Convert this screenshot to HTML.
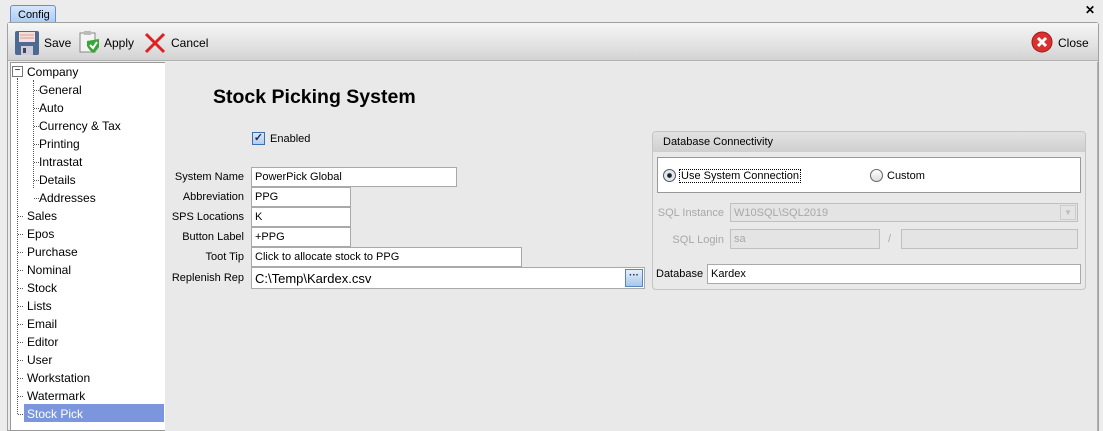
<!DOCTYPE html>
<html><head><style>
*{margin:0;padding:0;box-sizing:border-box}
body{width:1103px;height:431px;background:#ececec;font-family:"Liberation Sans",sans-serif;font-size:12px;color:#000;position:relative;overflow:hidden}
.a{position:absolute;white-space:nowrap}
.in{position:absolute;background:#fff;border:1px solid #a9a9a9;height:20px;padding:3px 3px;font-size:11px}
.lb{position:absolute;font-size:11px;text-align:right;width:80px}
.t{position:absolute;font-size:12px}
.dot{position:absolute;border-left:1px dotted #555}
.hd{position:absolute;border-top:1px dotted #555;width:5px}
</style></head><body>
<div class="a" style="left:10px;top:5px;width:46px;height:20px;border:1px solid #6a8fd0;border-radius:3px;background:linear-gradient(#d5e6fb,#a9c9f2);font-size:11px;padding:3px 0 0 7px">Config</div>
<div class="a" style="left:1085px;top:3px;font-weight:bold;font-size:12px">✕</div>
<div class="a" style="left:7px;top:22px;width:1092px;height:409px;border:1px solid #a0a0a0;border-radius:3px 3px 0 0;background:#ececec"></div>
<div class="a" style="left:8px;top:23px;width:1090px;height:38px;background:linear-gradient(#f6f6f6,#e2e2e2 60%,#d3d3d3);border-bottom:1px solid #b0b0b0"></div>
<svg class="a" style="left:14px;top:30px" width="26" height="26"><rect x="1" y="1" width="24" height="24" rx="2" fill="#4d6a91"/><rect x="5" y="2" width="16" height="10" fill="#f3e0d8"/><line x1="6" y1="5" x2="20" y2="5" stroke="#d99"/><line x1="6" y1="8" x2="20" y2="8" stroke="#d99"/><rect x="7" y="16" width="12" height="9" fill="#ccd"/><rect x="9" y="18" width="3" height="5" fill="#445"/></svg>
<div class="a" style="left:44px;top:36px">Save</div>
<svg class="a" style="left:77px;top:30px" width="24" height="24"><rect x="3" y="3" width="15" height="19" fill="#f4f4f4" stroke="#888"/><rect x="7" y="1" width="7" height="4" fill="#bbb"/><path d="M10 11 L22 9 L22 17 Q18 23 16 23 Q12 20 10 16Z" fill="#3aa63a"/><path d="M13 15 L16 18 L20 12" stroke="#fff" stroke-width="2" fill="none"/></svg>
<div class="a" style="left:104px;top:36px">Apply</div>
<svg class="a" style="left:143px;top:31px" width="24" height="24"><path d="M3 3 L21 21 M21 3 L3 21" stroke="#e02020" stroke-width="3"/></svg>
<div class="a" style="left:171px;top:36px">Cancel</div>
<svg class="a" style="left:1031px;top:31px" width="22" height="22"><circle cx="11" cy="11" r="10" fill="#d93030" stroke="#a01818"/><path d="M7 7 L15 15 M15 7 L7 15" stroke="#fff" stroke-width="3"/></svg>
<div class="a" style="left:1058px;top:36px">Close</div>
<div class="a" style="left:10px;top:62px;width:156px;height:369px;background:#fff;border:1px solid #999"></div>
<div class="a" style="left:165px;top:62px;width:932px;height:369px;background:#e9e9e9"></div>
<div class="a" style="left:1097px;top:62px;width:1px;height:369px;background:#b0b0b0"></div>
<div class="a" style="left:12px;top:66px;width:11px;height:11px;border:1px solid #777;background:#fff;font-size:10px;line-height:8px;text-align:center">−</div>
<div class="t" style="left:27px;top:65px">Company</div>
<div class="dot" style="left:33px;top:80px;height:108px"></div>
<div class="dot" style="left:17px;top:78px;height:336px"></div>
<div id="tree"></div>
<div class="a" style="left:24px;top:404px;width:140px;height:18px;background:#7b96dc"></div>
<script>
var s=["General","Auto","Currency & Tax","Printing","Intrastat","Details","Addresses"],h="";
s.forEach(function(x,i){var y=83+i*18;h+='<div class="hd" style="left:34px;top:'+(y+7)+'px"></div><div class="t" style="left:39px;top:'+y+'px">'+x.replace('&','&amp;')+'</div>'});
var m=["Sales","Epos","Purchase","Nominal","Stock","Lists","Email","Editor","User","Workstation","Watermark","Stock Pick"];
m.forEach(function(x,i){var y=209+i*18;h+='<div class="hd" style="left:18px;top:'+(y+7)+'px"></div><div class="t" style="left:27px;top:'+y+'px;z-index:2;'+(i==11?'color:#fff':'')+'">'+x+'</div>'});
document.getElementById('tree').innerHTML=h;
</script>
<div class="a" style="left:213px;top:86px;font-size:19.5px;font-weight:bold">Stock Picking System</div>
<div class="a" style="left:252px;top:132px;width:13px;height:13px;border:1px solid #3c6eb4;background:linear-gradient(#dbe8f8,#b4cdef);font-size:11px;line-height:11px;text-align:center;color:#1a2e66;font-weight:bold">✓</div>
<div class="a" style="left:270px;top:133px;font-size:11px">Enabled</div>
<div class="lb" style="left:164px;top:171px">System Name</div><div class="in" style="left:251px;top:167px;width:206px">PowerPick Global</div>
<div class="lb" style="left:164px;top:191px">Abbreviation</div><div class="in" style="left:251px;top:187px;width:100px">PPG</div>
<div class="lb" style="left:164px;top:211px">SPS Locations</div><div class="in" style="left:251px;top:207px;width:100px">K</div>
<div class="lb" style="left:164px;top:231px">Button Label</div><div class="in" style="left:251px;top:227px;width:100px">+PPG</div>
<div class="lb" style="left:164px;top:251px">Toot Tip</div><div class="in" style="left:251px;top:247px;width:271px">Click to allocate stock to PPG</div>
<div class="lb" style="left:164px;top:272px">Replenish Rep</div><div class="in" style="left:251px;top:267px;width:394px;height:22px;font-size:13px;padding-top:3px">C:\Temp\Kardex.csv</div>
<div class="a" style="left:625px;top:269px;width:18px;height:18px;border:1px solid #5a85c0;background:linear-gradient(#e6f0fb,#a8c6ea);font-size:10px;text-align:center;line-height:12px;font-weight:bold;color:#234">···</div>
<div class="a" style="left:652px;top:131px;width:434px;height:159px;border:1px solid #c4c4c4;border-radius:4px;background:#e9e9e9"></div>
<div class="a" style="left:653px;top:132px;width:432px;height:20px;background:linear-gradient(#e2e2e2,#cfcfcf);border-radius:3px 3px 0 0;font-size:11px;padding:4px 0 0 10px">Database Connectivity</div>
<div class="a" style="left:657px;top:157px;width:424px;height:36px;background:#fff;border:1px solid #999"></div>
<div class="a" style="left:663px;top:169px;width:13px;height:13px;border-radius:50%;border:1px solid #555;background:radial-gradient(#222 25%,#dfe8f4 35%)"></div>
<div class="a" style="left:679px;top:169px;font-size:11px;border:1px dotted #000;padding:0 1px">Use System Connection</div>
<div class="a" style="left:870px;top:169px;width:13px;height:13px;border-radius:50%;border:1px solid #666;background:linear-gradient(#fff,#ddd)"></div>
<div class="a" style="left:887px;top:170px;font-size:11px">Custom</div>
<div class="lb" style="left:644px;top:207px;color:#a8a8a8">SQL Instance</div>
<div class="a" style="left:730px;top:203px;width:348px;height:19px;border:1px solid #c0c0c0;background:#e4e4e4;color:#a8a8a8;font-size:11px;padding:3px">W10SQL\SQL2019</div>
<div class="a" style="left:1060px;top:205px;width:16px;height:15px;border:1px solid #ccc;color:#bbb;font-size:8px;text-align:center;line-height:14px">▼</div>
<div class="lb" style="left:644px;top:234px;color:#a8a8a8">SQL Login</div>
<div class="a" style="left:730px;top:229px;width:150px;height:20px;border:1px solid #c0c0c0;background:#e4e4e4;color:#a8a8a8;font-size:11px;padding:3px">sa</div>
<div class="a" style="left:888px;top:233px;color:#a8a8a8;font-size:11px">/</div>
<div class="a" style="left:901px;top:229px;width:177px;height:20px;border:1px solid #c0c0c0;background:#e4e4e4"></div>
<div class="a" style="left:656px;top:268px;font-size:11px">Database</div>
<div class="in" style="left:707px;top:264px;width:374px">Kardex</div>
</body></html>
